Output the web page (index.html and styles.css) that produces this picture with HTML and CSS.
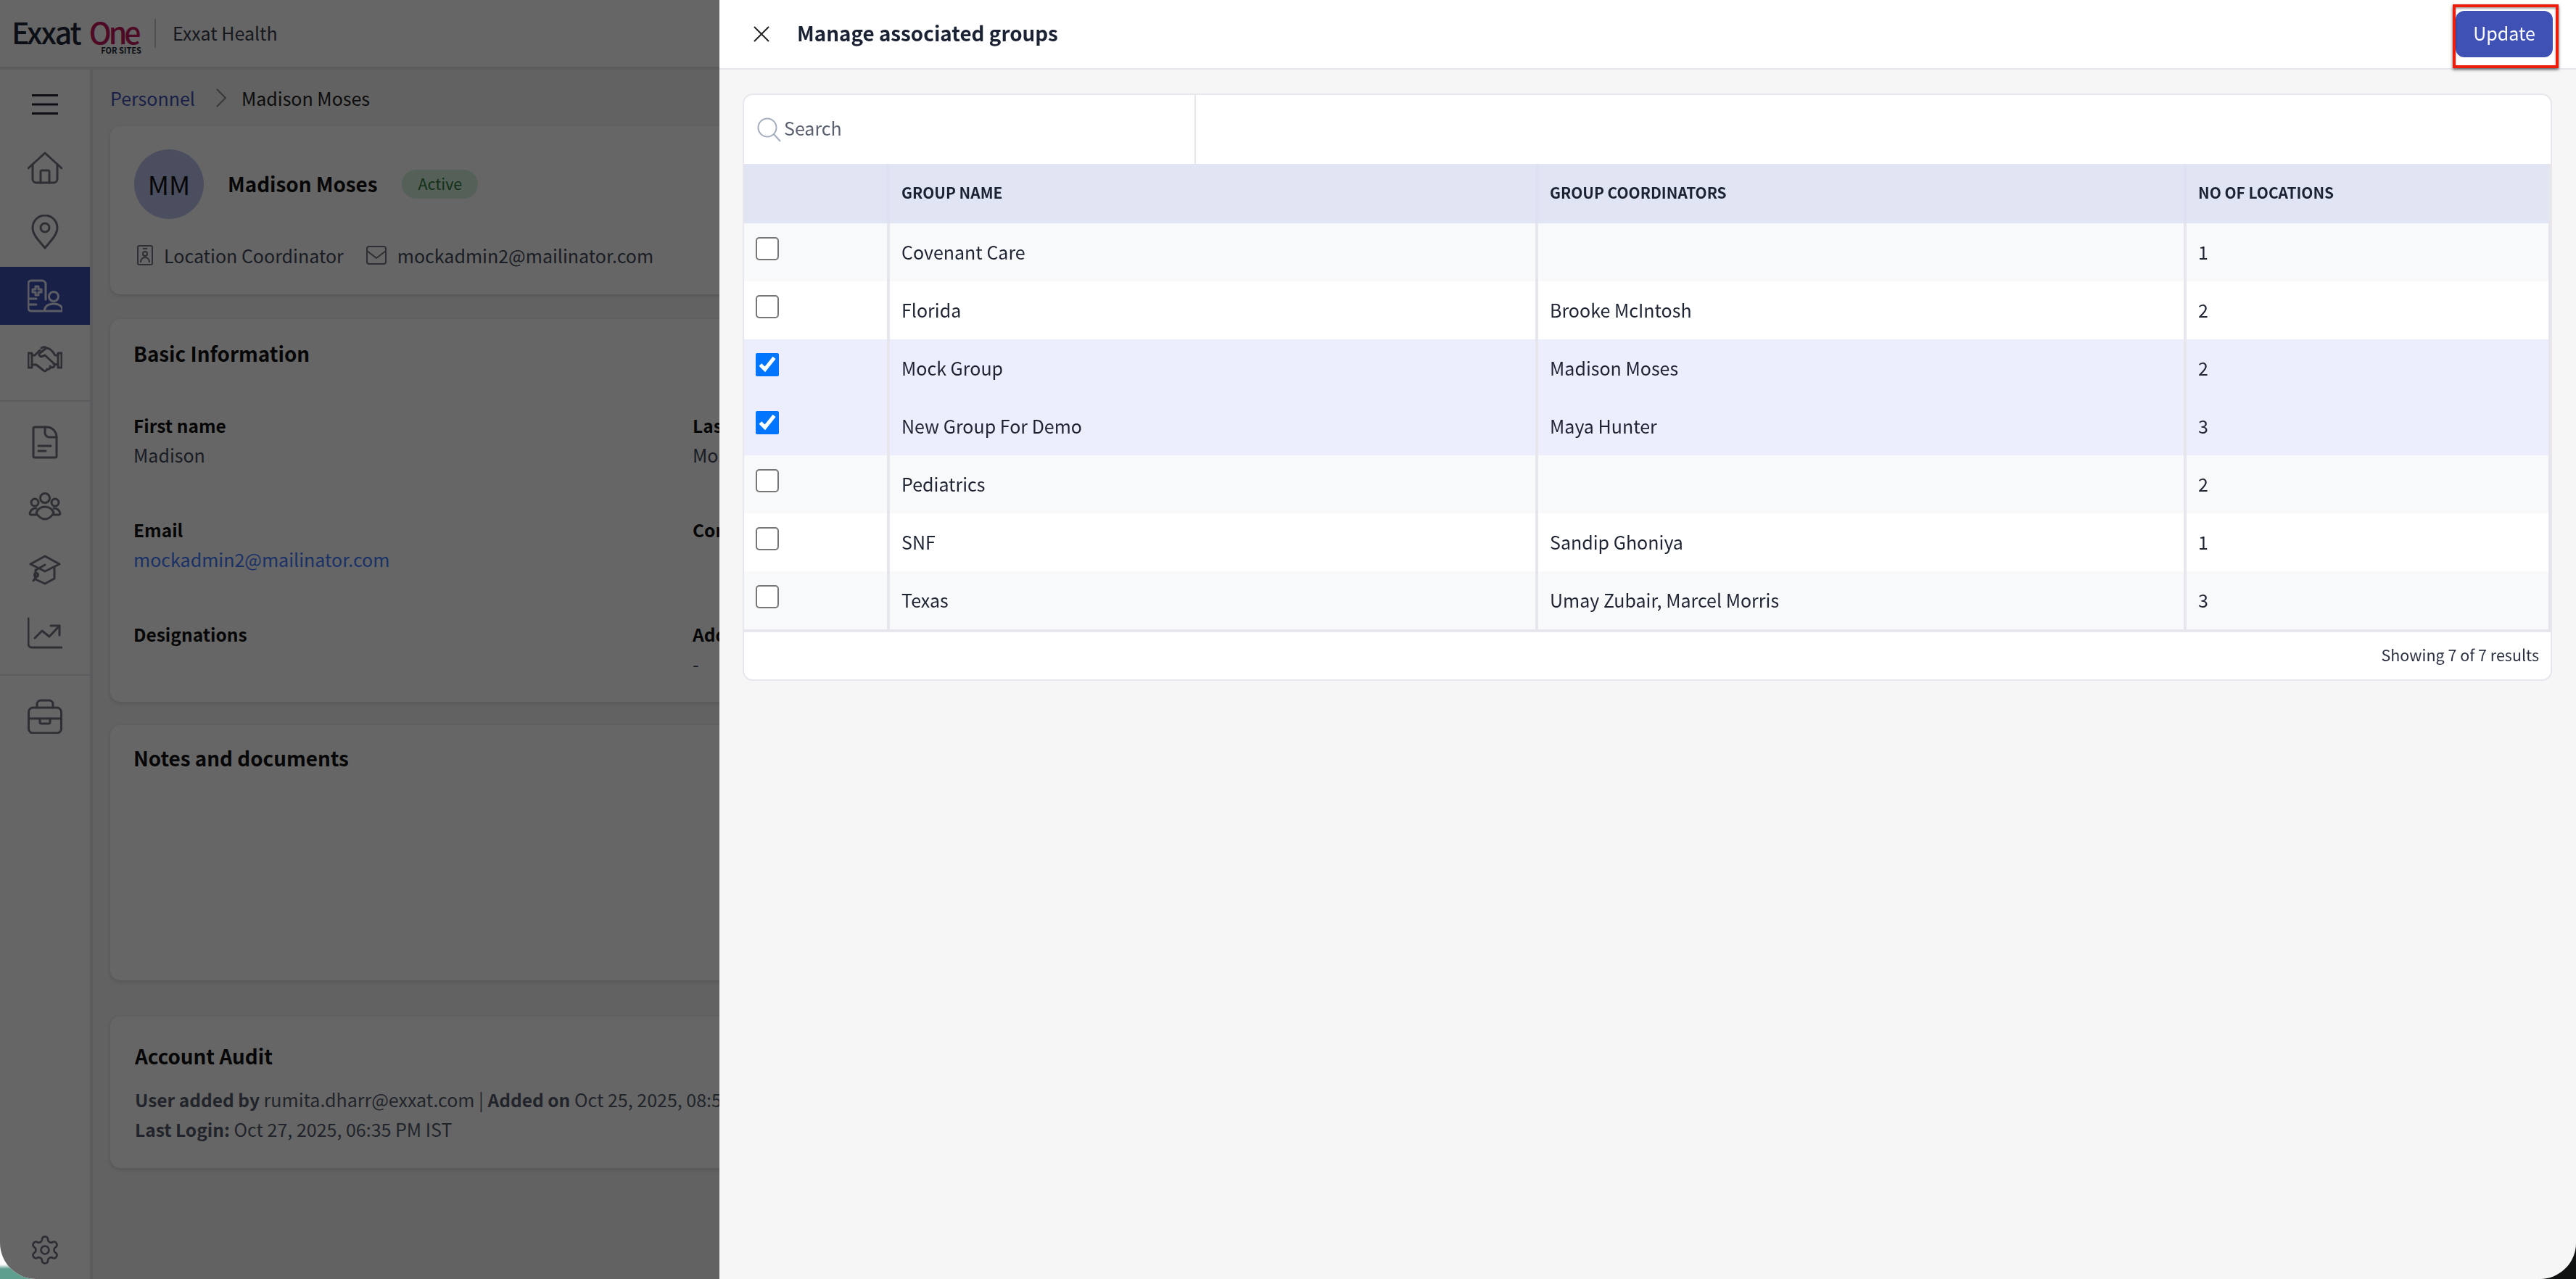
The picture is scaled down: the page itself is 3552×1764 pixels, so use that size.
FILE: index.html
```html
<!DOCTYPE html>
<html lang="en">
<head>
  <meta charset="UTF-8">
  <title>Manage associated groups</title>
  <link rel="stylesheet" href="styles.css">
</head>
<body>
  <div class="app">
    <header class="topbar">
      <div class="logo">
        <div class="logo-name"><span class="logo-exxat">Exxat</span><span class="logo-one">One</span></div>
        <div class="logo-sub">FOR SITES</div>
      </div>
      <div class="org">Exxat Health</div>
    </header>

    <div class="main">
      <nav class="sidebar">
        <button class="menu-button">
          <svg width="36" height="28" viewBox="0 0 36 28" class="line-icon"><path d="M0 1.5H36M0 14H36M0 26.500H36"/></svg>
        </button>
        <div class="nav-group">
          <a class="nav-item"><svg width="48" height="48" viewBox="0 0 48 48" class="line-icon"><path d="M1 24L24 3L47 24"/><path d="M7 19V39a5 5 0 0 0 5 5H36a5 5 0 0 0 5-5V19"/><path d="M18 44V29a2 2 0 0 1 2-2H28a2 2 0 0 1 2 2V44"/></svg></a>
          <a class="nav-item"><svg width="48" height="48" viewBox="0 0 48 48" class="line-icon"><path d="M24 46C18 38 7 29 7 18a17 17 0 0 1 34 0C41 29 30 38 24 46Z"/><circle cx="24" cy="18" r="6"/></svg></a>
          <a class="nav-item active"><svg width="48" height="48" viewBox="0 0 48 48" class="line-icon"><path d="M22 45H5a4 4 0 0 1-4-4V7a4 4 0 0 1 4-4H20a5 5 0 0 1 5 5V29"/><path d="M1 28H12M1 36H12"/><path d="M11 11h4v4h4v4h-4v4h-4v-4H7v-4h4Z"/><circle cx="36" cy="25" r="6.500"/><path d="M24.500 45c-1 0-1-1-1-2c1-5 6-8 12.500-8s11.500 3 12 8c0 1 0 2-1 2Z"/></svg></a>
          <a class="nav-item"><svg width="48" height="48" viewBox="0 0 48 48" class="line-icon"><path d="M1 15h5v20H1ZM42 15h5v20h-5Z"/><path d="M6 18h4l7-7M19 8a8 8 0 0 1 6-1"/><path d="M42 18h-4c-3-5-7-10-12-10l-9 7c-2 2-1 4 2 5l5-2l12 11a3 3 0 0 1-4 5l-1-1a3 3 0 0 1-4 4a3 3 0 0 1-5 2l-10-8H6"/><path d="M36 30l6 1"/></svg></a>
        </div>
        <div class="nav-group">
          <a class="nav-item"><svg width="48" height="48" viewBox="0 0 48 48" class="line-icon"><path d="M10 3H26C34 3 40 9 40 17V43a2 2 0 0 1-2 2H10a2 2 0 0 1-2-2V5a2 2 0 0 1 2-2Z"/><path d="M24 3V11a6 6 0 0 0 6 6H40"/><path d="M15 29H32M15 36H25"/></svg></a>
          <a class="nav-item"><svg width="48" height="48" viewBox="0 0 48 48" class="line-icon"><circle cx="24" cy="13" r="6.500"/><circle cx="10" cy="19" r="5"/><circle cx="38" cy="19" r="5"/><path d="M12 33c2-5 7-8 12-8s10 3 12 8c-2 5-7 9-12 9s-10-4-12-9Z"/><path d="M12 27c-5 0-8 3-9 7c0 1 1 2 2 2h8M36 27c5 0 8 3 9 7c0 1-1 2-2 2h-8"/></svg></a>
          <a class="nav-item"><svg width="48" height="48" viewBox="0 0 48 48" class="line-icon"><path d="M24 5L44 16L24 26L4 16Z"/><path d="M37 20V36L24 43L11 37V24"/><path d="M24 17L12 24"/><circle cx="12" cy="31" r="2.500"/><path d="M12 33L8 39"/></svg></a>
          <a class="nav-item"><svg width="48" height="48" viewBox="0 0 48 48" class="line-icon"><path d="M1 3V38a5 5 0 0 0 5 5H47"/><path d="M10 30L20 20L30 28L44 13"/><path d="M32 13H44V26"/></svg></a>
        </div>
        <div class="nav-group">
          <a class="nav-item"><svg width="48" height="48" viewBox="0 0 48 48" class="line-icon"><rect x="1.500" y="12" width="45" height="35" rx="6"/><path d="M13 12V7a5 5 0 0 1 5-5H30a5 5 0 0 1 5 5V12"/><path d="M1.500 27H46.500"/><path d="M17 27v5a2 2 0 0 0 2 2H29a2 2 0 0 0 2-2V27"/></svg></a>
        </div>
        <a class="nav-item settings"><svg width="44" height="44" viewBox="0 0 24 24" class="gear-icon"><path d="M12.220 2h-.44a2 2 0 0 0-2 2v.18a2 2 0 0 1-1 1.730l-.43.25a2 2 0 0 1-2 0l-.15-.08a2 2 0 0 0-2.730.73l-.22.38a2 2 0 0 0 .73 2.730l.15.1a2 2 0 0 1 1 1.720v.51a2 2 0 0 1-1 1.740l-.15.09a2 2 0 0 0-.73 2.730l.22.38a2 2 0 0 0 2.730.73l.15-.08a2 2 0 0 1 2 0l.43.25a2 2 0 0 1 1 1.730V20a2 2 0 0 0 2 2h.44a2 2 0 0 0 2-2v-.18a2 2 0 0 1 1-1.730l.43-.25a2 2 0 0 1 2 0l.15.08a2 2 0 0 0 2.730-.73l.22-.39a2 2 0 0 0-.73-2.730l-.15-.08a2 2 0 0 1-1-1.740v-.5a2 2 0 0 1 1-1.740l.15-.09a2 2 0 0 0 .73-2.730l-.22-.38a2 2 0 0 0-2.730-.73l-.15.08a2 2 0 0 1-2 0l-.43-.25a2 2 0 0 1-1-1.730V4a2 2 0 0 0-2-2Z"/><circle cx="12" cy="12" r="3"/></svg></a>
      </nav>

      <div class="content">
        <div class="breadcrumb">
          <a class="crumb-link">Personnel</a>
          <svg width="16" height="26" viewBox="0 0 16 26" class="crumb-sep"><path d="M2 1L14 13L2 25"/></svg>
          <span>Madison Moses</span>
        </div>

        <section class="card profile-card">
          <div class="profile-head">
            <div class="avatar">MM</div>
            <div class="profile-name">Madison Moses</div>
            <div class="badge">Active</div>
          </div>
          <div class="profile-meta">
            <span class="meta-item">
              <svg width="22" height="28" viewBox="0 0 22 28" class="meta-icon"><rect x="1" y="1" width="20" height="26" rx="2"/><path d="M8 5H14"/><circle cx="11" cy="12" r="3"/><path d="M5 24c0-5 3-7 6-7s6 2 6 7"/></svg>
              Location Coordinator
            </span>
            <span class="meta-item">
              <svg width="28" height="26" viewBox="0 0 28 26" class="meta-icon"><rect x="1" y="1" width="26" height="24" rx="3"/><path d="M1 7L14 17L27 7"/></svg>
              mockadmin2@mailinator.com
            </span>
          </div>
        </section>

        <section class="card info-card">
          <h2 class="card-title">Basic Information</h2>
          <div class="info-grid">
            <div class="field"><div class="field-label">First name</div><div class="field-value">Madison</div></div>
            <div class="field"><div class="field-label">Last name</div><div class="field-value">Moses</div></div>
            <div class="field"><div class="field-label">Email</div><a class="field-value field-link">mockadmin2@mailinator.com</a></div>
            <div class="field"><div class="field-label">Contact number</div></div>
            <div class="field"><div class="field-label">Designations</div></div>
            <div class="field"><div class="field-label">Address</div><div class="field-value">-</div></div>
          </div>
        </section>

        <section class="card notes-card">
          <h2 class="card-title">Notes and documents</h2>
        </section>

        <section class="card audit-card">
          <h2 class="card-title">Account Audit</h2>
          <p class="audit-line"><b>User added by</b> rumita.dharr@exxat.com | <b>Added on</b> Oct 25, 2025, 08:57 PM IST</p>
          <p class="audit-line"><b>Last Login:</b> Oct 27, 2025, 06:35 PM IST</p>
        </section>
      </div>
    </div>
  </div>

  <div class="backdrop"></div>

  <aside class="panel">
    <div class="panel-header">
      <div class="panel-title-wrap">
        <button class="close-button">
          <svg width="24" height="24" viewBox="0 0 24 24" class="close-icon"><path d="M2 2L22 22M22 2L2 22"/></svg>
        </button>
        <h1 class="panel-title">Manage associated groups</h1>
      </div>
      <button class="update-button">Update</button>
    </div>

    <div class="panel-body">
      <div class="grid-card">
        <div class="grid-toolbar">
          <div class="search-box">
            <svg width="34" height="34" viewBox="0 0 34 34" class="search-icon"><circle cx="14" cy="14" r="12.500"/><path d="M23 23L32 33"/></svg>
            <span class="search-text">Search</span>
          </div>
        </div>
        <table class="grid">
          <colgroup><col class="col-check"><col class="col-wide"><col class="col-wide"><col></colgroup>
          <thead>
            <tr><th></th><th>GROUP NAME</th><th>GROUP COORDINATORS</th><th>NO OF LOCATIONS</th></tr>
          </thead>
          <tbody>
            <tr class="stripe"><td><input type="checkbox"></td><td>Covenant Care</td><td></td><td>1</td></tr>
            <tr><td><input type="checkbox"></td><td>Florida</td><td>Brooke McIntosh</td><td>2</td></tr>
            <tr class="selected"><td><input type="checkbox" checked></td><td>Mock Group</td><td>Madison Moses</td><td>2</td></tr>
            <tr class="selected"><td><input type="checkbox" checked></td><td>New Group For Demo</td><td>Maya Hunter</td><td>3</td></tr>
            <tr class="stripe"><td><input type="checkbox"></td><td>Pediatrics</td><td></td><td>2</td></tr>
            <tr><td><input type="checkbox"></td><td>SNF</td><td>Sandip Ghoniya</td><td>1</td></tr>
            <tr class="stripe"><td><input type="checkbox"></td><td>Texas</td><td>Umay Zubair, Marcel Morris</td><td>3</td></tr>
          </tbody>
        </table>
        <div class="grid-footer">Showing 7 of 7 results</div>
      </div>
    </div>
  </aside>

  <div class="highlight-box"></div>
</body>
</html>
```

FILE: styles.css
```css
* {
  box-sizing: border-box;
}
html, body {
  margin: 0;
  height: 100%;
}
body {
  font-family: "Noto Sans CJK SC", "Noto Sans", sans-serif;
  font-size: 25px;
  color: #1f2433;
  background:
    linear-gradient(to bottom, #fff 1744px, #5f9f90 1750px) left / 50% 100% no-repeat,
    #2a2e2c;
  overflow: hidden;
}
.app {
  height: 100vh;
  display: flex;
  flex-direction: column;
  background: #f5f5f5;
  border-radius: 0 0 50px 50px;
  overflow: hidden;
}

/* top bar */
.topbar {
  height: 96px;
  flex: none;
  display: flex;
  align-items: center;
  background: #fff;
  border-bottom: 4px solid #e6e6ec;
  padding-left: 16px;
}
.logo {
  width: 197px;
  height: 40px;
  position: relative;
  margin-top: -2px;
}
.logo-name {
  font-size: 41px;
  line-height: 36px;
  white-space: nowrap;
}
.logo-exxat {
  font-weight: 500;
  letter-spacing: -2px;
  color: #1f2937;
  margin-right: 12px;
}
.logo-one {
  font-weight: 500;
  letter-spacing: -4px;
  color: #c2185b;
}
.logo-sub {
  position: absolute;
  right: 18px;
  top: 38px;
  font-size: 11px;
  font-weight: 700;
  line-height: 12px;
  color: #1f2937;
}
.org {
  height: 40px;
  line-height: 38px;
  padding-left: 23px;
  border-left: 2px solid #c8c8d0;
  color: #3a3f4d;
}

/* side nav */
.main {
  flex: 1;
  display: flex;
  min-height: 0;
}
.sidebar {
  width: 128px;
  flex: none;
  display: flex;
  flex-direction: column;
  background: #fff;
  border-right: 4px solid #e6e6ec;
}
.menu-button {
  height: 96px;
  flex: none;
  border: none;
  background: transparent;
  padding: 0;
  display: flex;
  align-items: center;
  justify-content: center;
}
.nav-group {
  display: flex;
  flex-direction: column;
  gap: 8px;
  padding-bottom: 16px;
  border-bottom: 2px solid #e6e6ec;
  margin-bottom: 16px;
}
.nav-group:last-of-type {
  border-bottom: none;
}
.nav-item {
  height: 80px;
  display: flex;
  align-items: center;
  justify-content: center;
}
.nav-item.active {
  background: #3f51b5;
}
.nav-item.active .line-icon {
  stroke: #e4e7fb;
}
.settings {
  margin-top: auto;
}
.line-icon, .gear-icon {
  fill: none;
  stroke: #727684;
  stroke-width: 3;
  stroke-linecap: round;
  stroke-linejoin: round;
}
.menu-button .line-icon {
  stroke: #1f2433;
  stroke-width: 3;
}
.gear-icon {
  stroke-width: 1.500;
}

/* page behind the panel */
.content {
  flex: 1;
  min-width: 0;
  padding-left: 24px;
  padding-right: 32px;
}
.breadcrumb {
  height: 78px;
  display: flex;
  align-items: center;
  gap: 14px;
  color: #222;
}
.crumb-link {
  color: #3f51b5;
}
.crumb-sep {
  fill: none;
  stroke: #8a8a8a;
  stroke-width: 2;
  margin: 0 6px 0 14px;
}
.card {
  background: #fff;
  border-radius: 14px;
  padding-left: 32px;
  box-shadow: 0 2px 6px rgba(0, 0, 0, 0.14);
}
.profile-card {
  height: 232px;
  padding-top: 32px;
  margin-bottom: 34px;
  padding-left: 33px;
}
.profile-head {
  display: flex;
  align-items: center;
}
.avatar {
  width: 96px;
  height: 96px;
  border-radius: 50%;
  background: #bcc3ec;
  color: #111;
  font-size: 36px;
  padding-bottom: 3px;
  display: flex;
  align-items: center;
  justify-content: center;
}
.profile-name {
  font-size: 27.800px;
  font-weight: 600;
  color: #111;
  margin: -3px 0 0 33px;
}
.badge {
  margin-left: 34px;
  height: 40px;
  padding: 0 22px;
  line-height: 37px;
  font-size: 21.500px;
  border-radius: 20px;
  background: #d4f0dc;
  color: #2f7a3c;
}
.profile-meta {
  display: flex;
  gap: 31px;
  margin-top: 32px;
  color: #444a5a;
  padding-left: 4px;
}
.meta-item {
  display: flex;
  align-items: center;
  gap: 15px;
}
.meta-icon {
  fill: none;
  stroke: #727684;
  stroke-width: 2;
  stroke-linejoin: round;
}
.info-card {
  height: 528px;
  padding-top: 24px;
  margin-bottom: 32px;
}
.card-title {
  margin: 0;
  font-size: 27.800px;
  line-height: 46px;
  font-weight: 600;
  color: #111;
}
.info-grid {
  display: grid;
  grid-template-columns: 771px 1fr;
  grid-auto-rows: 144px;
  margin-top: 56px;
}
.field-label {
  font-size: 24.500px;
  font-weight: 600;
  line-height: 40px;
  padding-top: 1px;
  color: #111;
}
.field-value {
  display: block;
  line-height: 40px;
  color: #444a5a;
}
.field-link {
  color: #3f7cff;
}
.notes-card {
  height: 352px;
  padding-top: 22px;
  margin-bottom: 50px;
}
.audit-card {
  height: 209px;
  padding-top: 31px;
  padding-left: 34px;
}
.audit-line {
  margin: 0;
  line-height: 40px;
  color: #555b6b;
}
.audit-card .card-title {
  margin-bottom: 17px;
}
.audit-line b {
  font-size: 24.500px;
  font-weight: 600;
}

/* overlay */
.backdrop {
  position: fixed;
  inset: 0;
  background: rgba(0, 0, 0, 0.6);
  border-bottom-left-radius: 50px;
}
.panel {
  position: fixed;
  top: 0;
  right: 0;
  bottom: 0;
  left: 992px;
  background: #f6f6f6;
  border-bottom-right-radius: 50px;
  display: flex;
  flex-direction: column;
}
.panel-header {
  height: 96px;
  flex: none;
  background: #fff;
  border-bottom: 2px solid #e6e6ec;
  display: flex;
  align-items: center;
  justify-content: space-between;
  padding: 0 32px 0 46px;
}
.panel-title-wrap {
  display: flex;
  align-items: center;
}
.close-button {
  border: none;
  background: transparent;
  padding: 0;
  height: 24px;
}
.close-icon {
  fill: none;
  stroke: #222;
  stroke-width: 2;
}
.panel-title {
  margin: -5px 0 0 37px;
  font-size: 27.800px;
  font-weight: 600;
  color: #1a2233;
}
.update-button {
  width: 134px;
  height: 64px;
  border: none;
  border-radius: 12px;
  background: #3f51b5;
  color: #fff;
  font-family: inherit;
  font-size: 25px;
  padding: 0 0 4px;
  margin-top: -1px;
}
.highlight-box {
  position: absolute;
  left: 3382px;
  top: 6px;
  width: 146px;
  height: 88px;
  border: 4px solid #ee1c0a;
  box-shadow: 0 2px 4px rgba(0, 0, 0, 0.6), inset 0 2px 3px rgba(0, 0, 0, 0.35);
}

.panel-body {
  padding: 33px 33px 0 32px;
}
.grid-card {
  background: #fff;
  border: 2px solid #e6e6ec;
  border-radius: 14px;
  overflow: hidden;
}
.grid-toolbar {
  height: 95px;
}
.search-box {
  width: 623px;
  height: 100%;
  border-right: 2px solid #e6e6ec;
  display: flex;
  align-items: center;
  padding-left: 18px;
  gap: 3px;
}
.search-icon {
  fill: none;
  stroke: #a4adbd;
  stroke-width: 2;
}
.search-text {
  color: #5b6170;
  margin-top: -5px;
}
.grid {
  width: 2491px;
  table-layout: fixed;
  border-collapse: separate;
  border-spacing: 0;
  border-right: 3px solid #e6e6ec;
  border-bottom: 4px solid #e6e6ec;
}
.col-check {
  width: 201px;
}
.col-wide {
  width: 894px;
}
.grid th {
  height: 82px;
  padding: 0 16px 5px;
  background: #e0e4f3;
  font-size: 20.900px;
  font-weight: 600;
  text-align: left;
  color: #1a2233;
  border-right: 4px solid #dde1f1;
}
.grid td {
  height: 80px;
  padding: 0 16px 3px;
  color: #1f2433;
  border-right: 4px solid #e6e6ec;
}
.grid th:last-child, .grid td:last-child {
  border-right: none;
}
.grid td:first-child {
  vertical-align: top;
}
.grid input {
  display: block;
  width: 32px;
  height: 32px;
  margin: 19px 0 0;
}
.grid input:not(:checked) {
  appearance: none;
  background: #fff;
  border: 2px solid #767676;
  border-radius: 5px;
}
.stripe td {
  background: #f8f9fb;
}
.selected td {
  background: #ecedfd;
}
.grid-footer {
  height: 65px;
  padding-right: 16px;
  padding-bottom: 5px;
  display: flex;
  align-items: center;
  justify-content: flex-end;
  font-size: 21.500px;
  color: #2a3040;
}
```
